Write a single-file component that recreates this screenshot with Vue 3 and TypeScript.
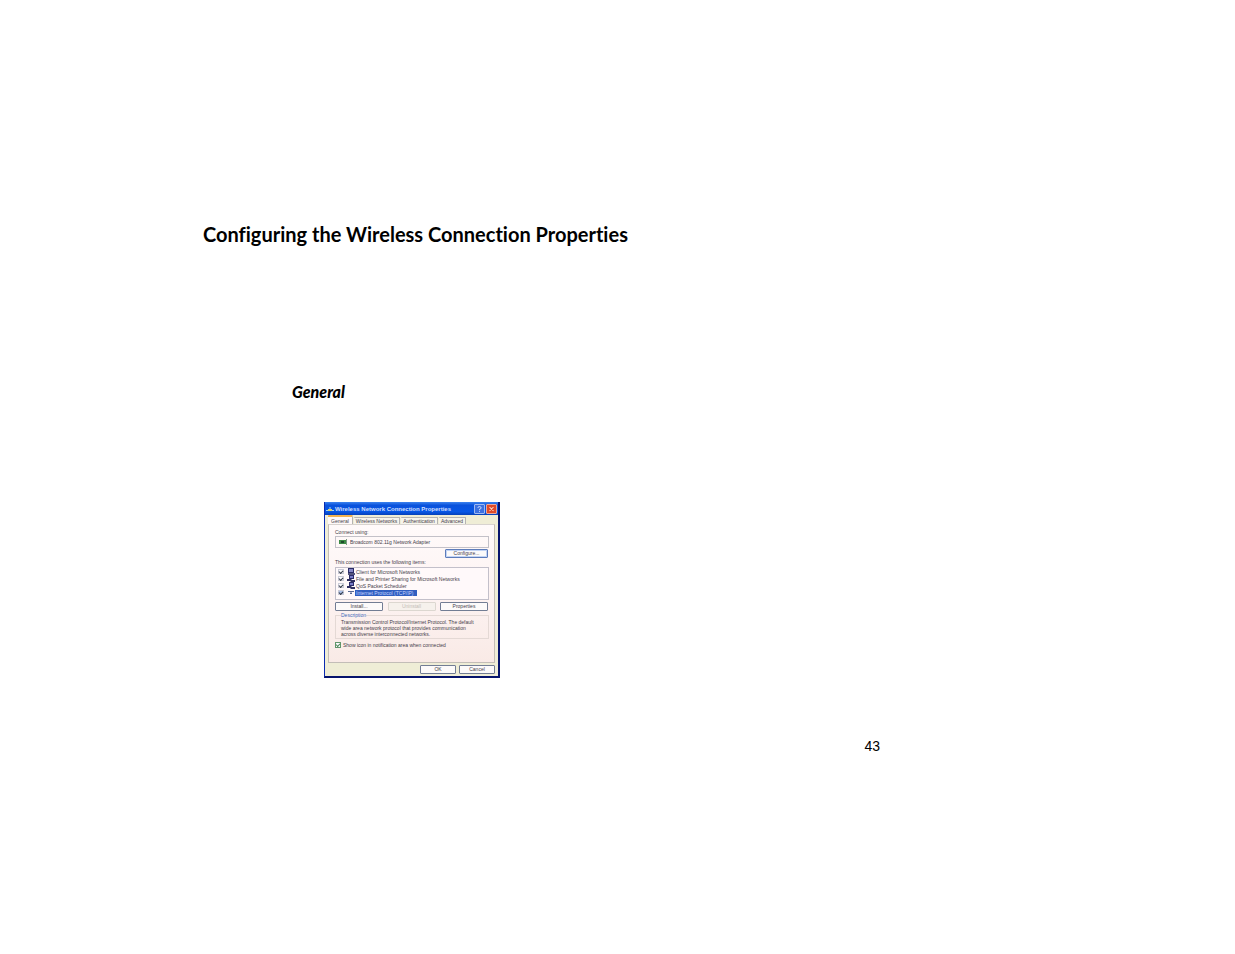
<script setup lang="ts">
import { ref } from 'vue'

interface Item {
  id: string
  label: string
  kind: 'client' | 'service' | 'protocol'
  checked: boolean
}

const tabs: string[] = ['General', 'Wireless Networks', 'Authentication', 'Advanced']
const active = ref<string>('General')
const adapter = ref<string>('Broadcom 802.11g Network Adapter')
const notify = ref<boolean>(true)
const selected = ref<string>('tcp')
const items = ref<Item[]>([
  { id: 'client', label: 'Client for Microsoft Networks', kind: 'client', checked: true },
  { id: 'share', label: 'File and Printer Sharing for Microsoft Networks', kind: 'service', checked: true },
  { id: 'qos', label: 'QoS Packet Scheduler', kind: 'service', checked: true },
  { id: 'tcp', label: 'Internet Protocol (TCP/IP)', kind: 'protocol', checked: true },
])
</script>

<template>
  <main class="page">
    <h1>Configuring the Wireless Connection Properties</h1>
    <h2>General</h2>
    <section class="dialog" aria-label="Wireless Network Connection Properties">
      <header class="titlebar">
        <svg class="net" viewBox="0 0 8 8" aria-hidden="true">
          <path d="M0 5.5h8M4 2v3.5" stroke="#9fd0ff" stroke-width="1" />
          <rect x="2" y="4" width="4" height="2" fill="#d8cf72" />
        </svg>
        <span class="title">Wireless Network Connection Properties</span>
        <button type="button" class="cap help" aria-label="Help">
          <svg viewBox="0 0 10 10"><path d="M3 3.5Q3 2 5 2t2 1.5Q7 5 5 5.3V6.5M5 7.5v1" fill="none" stroke="#d5e5ff" stroke-width="1.2" /></svg>
        </button>
        <button type="button" class="cap close" aria-label="Close">
          <svg viewBox="0 0 10 10"><path d="M2.5 2.5l5 5M7.5 2.5l-5 5" stroke="#ffd9c8" stroke-width="1.3" /></svg>
        </button>
      </header>
      <div class="body">
        <nav class="tabs" role="tablist">
          <button
            v-for="t in tabs"
            :key="t"
            type="button"
            role="tab"
            :aria-selected="t === active"
            :class="['tab', { on: t === active }]"
            @click="active = t"
          >{{ t }}</button>
        </nav>
        <div class="panel">
          <label class="line" for="adapter">Connect using:</label>
          <div class="adapter">
            <svg class="card" viewBox="0 0 9 6" aria-hidden="true">
              <rect x="0" y="1" width="8" height="4" fill="#3c8a45" />
              <rect x="2" y="2" width="3" height="2" fill="#1d4b2a" />
              <rect x="7" y="0" width="1" height="6" fill="#7d9a84" />
            </svg>
            <input id="adapter" v-model="adapter" type="text" readonly />
          </div>
          <div class="right"><button type="button" class="btn hot">Configure...</button></div>
          <p class="line items">This connection uses the following items:</p>
          <ul class="list">
            <li v-for="i in items" :key="i.id">
              <input :id="i.id" v-model="i.checked" type="checkbox" :class="['tick', { lit: i.id === selected }]" />
              <svg class="kind" viewBox="0 0 8 7" aria-hidden="true">
                <template v-if="i.kind === 'client'">
                  <rect x="1" y="0" width="6" height="5" fill="#2c2c66" />
                  <rect x="2" y="1" width="4" height="3" fill="#8587c6" />
                  <rect x="1" y="5" width="7" height="2" fill="#55557c" />
                </template>
                <template v-else-if="i.kind === 'service'">
                  <rect x="2" y="0" width="5" height="4" fill="#2b2b68" />
                  <rect x="3" y="1" width="3" height="2" fill="#777bc6" />
                  <path d="M0 4h4l1 1h3v2H4L3 6H0z" fill="#303060" />
                </template>
                <path v-else d="M1 2.5h6M4 2v3M3 4.5h2" fill="none" stroke="#586993" />
              </svg>
              <label :for="i.id" :class="['name', { sel: i.id === selected }]">{{ i.label }}</label>
            </li>
          </ul>
          <div class="actions">
            <button type="button" class="btn">Install...</button>
            <button type="button" class="btn" disabled>Uninstall</button>
            <button type="button" class="btn">Properties</button>
          </div>
          <fieldset class="group">
            <legend>Description</legend>
            <p>Transmission Control Protocol/Internet Protocol. The default wide area network protocol that provides communication across diverse interconnected networks.</p>
          </fieldset>
          <div class="notify">
            <input id="notify" v-model="notify" type="checkbox" class="tick boxed" />
            <label for="notify">Show icon in notification area when connected</label>
          </div>
        </div>
        <footer class="foot">
          <button type="button" class="btn">OK</button>
          <button type="button" class="btn">Cancel</button>
        </footer>
      </div>
    </section>
    <p class="number">43</p>
  </main>
</template>

<style>
body {
  margin: 0;
  background: #fff;
}
</style>

<style scoped>
* {
  box-sizing: border-box;
}
.page {
  min-height: 100vh;
  padding: 222px 355px 0 203px;
  color: #000;
  font-family: Lato, "Liberation Sans", sans-serif;
  font-variant-ligatures: none;
}
h1 {
  margin: 0;
  font-size: 20px;
  line-height: 24px;
  font-weight: 700;
  white-space: nowrap;
}
h2 {
  margin: 136px 0 0 89px;
  font-size: 16px;
  line-height: 20px;
  font-weight: 900;
  font-style: italic;
}
.dialog {
  width: 176px;
  margin: 100px 0 0 121px;
  border: solid #0a2bb0;
  border-width: 0 2px 2px 1px;
  border-right-color: #06146c;
  border-bottom-color: #06146c;
  background: #efedd6;
  color: #46414a;
  font: 5px/6px "Liberation Sans", sans-serif;
}
button,
input {
  margin: 0;
  padding: 0;
  font: inherit;
  color: inherit;
}
p {
  margin: 0;
}
.titlebar {
  display: flex;
  align-items: center;
  height: 13px;
  padding: 0 1px 0 1px;
  gap: 1px;
  background: linear-gradient(#3c83ee, #0a52dc 25%, #0757e6 75%, #0540b8);
}
.net {
  width: 8px;
  height: 8px;
}
.title {
  flex: 1;
  color: #cfdfff;
  font-size: 6px;
  font-weight: 700;
  line-height: 12px;
  white-space: nowrap;
}
.cap {
  width: 11px;
  height: 10px;
  border: 1px solid #9fb9f0;
  border-radius: 1px;
  background: #3c70e0;
}
.cap svg {
  display: block;
  width: 9px;
  height: 8px;
}
.close {
  border-color: #e8a79b;
  background: #df4a28;
}
.body {
  padding: 0 3px 2px;
}
.tabs {
  display: flex;
  align-items: flex-end;
  gap: 1px;
  height: 9px;
}
.tab {
  height: 7px;
  padding: 0 2px;
  border: 1px solid #b5b4b2;
  border-width: 1px 1px 0 0;
  border-radius: 1px 1px 0 0;
  background: #f6f4ec;
  line-height: 6px;
  white-space: nowrap;
}
.tab.on {
  height: 9px;
  padding: 0 3px;
  border-top: 2px solid #f2b350;
  background: #fff9f8;
}
.panel {
  padding: 4px 5px 11px 6px;
  border: 1px solid #c3bdb7;
  border-top-color: #d8d3cf;
  background: linear-gradient(#fffafa, #fdf3f2 50%, #f9eae6);
}
.line {
  display: block;
  height: 7px;
  line-height: 7px;
}
.adapter {
  display: flex;
  align-items: center;
  height: 12px;
  padding: 0 3px;
  gap: 2px;
  border: 1px solid #c3c1c8;
}
.card {
  width: 9px;
  height: 6px;
}
.adapter input {
  flex: 1;
  min-width: 0;
  height: 8px;
  border: 0;
  outline: 0;
  background: transparent;
}
.right {
  display: flex;
  justify-content: flex-end;
  padding: 1px 1px 0 0;
}
.btn {
  width: 48px;
  height: 9px;
  border: 1px solid #727d94;
  border-radius: 1px;
  background: #fcfafa;
  line-height: 7px;
}
.btn:disabled {
  border-color: #dcd7d0;
  background: #f6f1ec;
  color: #c4bcb7;
}
.btn.hot {
  width: 43px;
  border-color: #5d7cba;
  box-shadow: inset 0 0 0 1px #c3d4f4;
}
.items {
  height: 9px;
  line-height: 8px;
}
.list {
  height: 33px;
  margin: 0;
  padding: 0 2px;
  border: 1px solid #c3c0ca;
  background: #fff9fa;
  list-style: none;
}
.list li {
  display: flex;
  align-items: center;
  height: 7px;
}
.tick {
  appearance: none;
  width: 6px;
  height: 5px;
  border: 1px solid #cacbd7;
  background: #f9f9fc;
}
.tick:checked::before {
  content: "";
  display: block;
  width: 3px;
  height: 2px;
  border: solid #333947;
  border-width: 0 0 1px 1px;
  transform: rotate(-45deg);
}
.tick.lit {
  background: #a9bfe8;
}
.tick.boxed {
  height: 6px;
  border-color: #62966c;
}
.tick.boxed:checked::before {
  border-color: #4d8a58;
}
.kind {
  width: 8px;
  height: 7px;
  margin-left: 3px;
}
.name {
  height: 6px;
  padding-left: 1px;
  line-height: 6px;
  white-space: nowrap;
}
.name.sel {
  padding-right: 3px;
  background: #315fc0;
  color: #c1d3ff;
}
.actions {
  display: flex;
  justify-content: space-between;
  margin: 2px 1px 0 0;
}
.group {
  height: 28px;
  min-width: 0;
  margin: 0;
  padding: 0 9px 0 5px;
  border: 1px solid #e4d9d5;
}
.group legend {
  padding: 0;
  color: #4168b8;
  line-height: 8px;
}
.notify {
  display: flex;
  align-items: center;
  gap: 2px;
  height: 12px;
  white-space: nowrap;
}
.foot {
  display: flex;
  justify-content: flex-end;
  gap: 3px;
  padding-top: 2px;
}
.foot .btn {
  width: 36px;
}
.number {
  margin: 60px 0 0;
  font: 14px/16px "Liberation Sans", sans-serif;
  text-align: right;
}
</style>
